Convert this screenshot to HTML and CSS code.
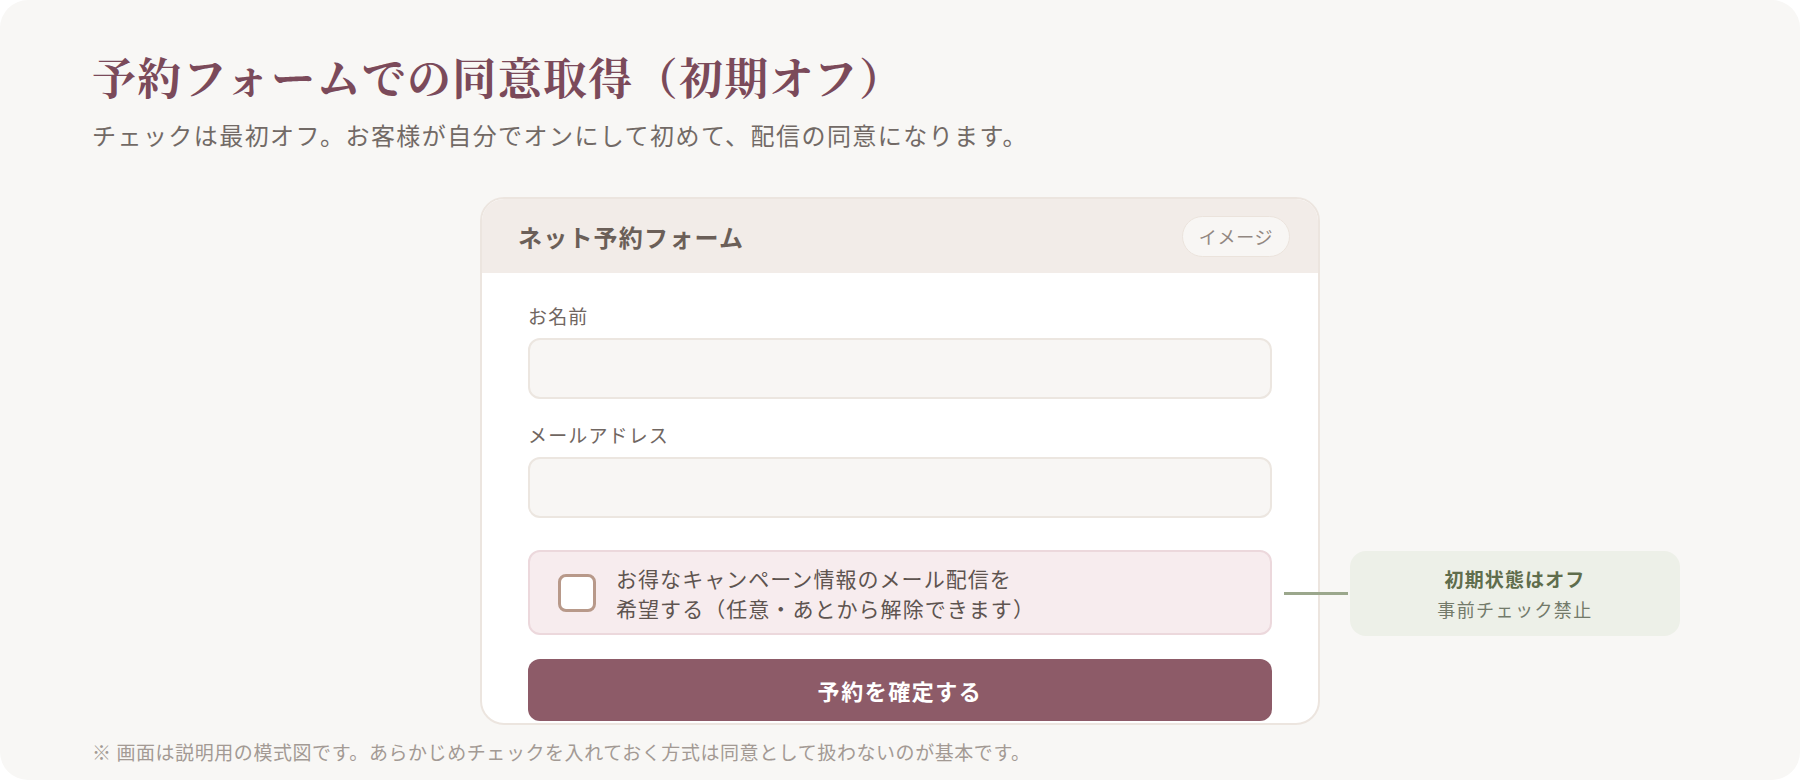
FILE: index.html
```html
<!DOCTYPE html>
<html lang="ja">
<head>
  <meta charset="UTF-8" />
  <meta name="viewport" content="width=device-width, initial-scale=1" />
  <title>予約フォームでの同意取得（初期オフ）</title>
  <link rel="stylesheet" href="styles.css">
</head>
<body>

  <main class="panel">
    <h1 class="title">予約フォームでの同意取得（初期オフ）</h1>
    <p class="lead">チェックは最初オフ。お客様が自分でオンにして初めて、配信の同意になります。</p>

    <div class="stage">
      <section class="form-card">
        <div class="card-head">
          <span class="card-title">ネット予約フォーム</span>
          <span class="pill">イメージ</span>
        </div>

        <div class="card-body">
          <div class="field">
            <label>お名前</label>
            <div class="input"></div>
          </div>

          <div class="field">
            <label>メールアドレス</label>
            <div class="input"></div>
          </div>

          <div class="consent">
            <span class="checkbox"></span>
            <p>お得なキャンペーン情報のメール配信を<br>希望する（任意・あとから解除できます）</p>
          </div>

          <button class="submit" type="button">予約を確定する</button>
        </div>
      </section>

      <aside class="note">
        <strong>初期状態はオフ</strong>
        <span>事前チェック禁止</span>
      </aside>
    </div>

    <p class="footnote">※ 画面は説明用の模式図です。あらかじめチェックを入れておく方式は同意として扱わないのが基本です。</p>
  </main>

</body>
</html>
```

FILE: styles.css
```css
html, body {
  margin: 0;
  background: #ffffff;
}

body {
  font-family: "Noto Sans CJK JP", "Noto Sans", sans-serif;
  color: #706661;
}

.panel {
  box-sizing: border-box;
  width: 1800px;
  height: 780px;
  background: #f8f7f5;
  border-radius: 28px;
  padding: 50px 92px 0;
}

.title {
  margin: 0;
  font-family: "Noto Serif CJK JP", "Liberation Serif", serif;
  font-size: 44px;
  line-height: 52px;
  font-weight: 700;
  letter-spacing: 0.03em;
  color: #7b4a5a;
}

.lead {
  margin: 15px 0 0;
  font-size: 24px;
  line-height: 36px;
  letter-spacing: 0.06em;
  color: #726a66;
}

.stage {
  position: relative;
  width: 840px;
  margin: 44px auto 0;
}

/* form card */
.form-card {
  box-sizing: border-box;
  height: 528px;
  background: #ffffff;
  border: 2px solid #ece5df;
  border-radius: 24px;
  overflow: hidden;
}

.card-head {
  display: flex;
  align-items: center;
  justify-content: space-between;
  height: 74px;
  padding: 0 28px 0 36px;
  background: #f2ece8;
}

.card-title {
  font-size: 24px;
  font-weight: 700;
  letter-spacing: 0.05em;
  color: #6b5f58;
}

.pill {
  display: flex;
  align-items: center;
  justify-content: center;
  box-sizing: border-box;
  width: 108px;
  height: 41px;
  border: 1px solid #ebe3dc;
  border-radius: 21px;
  background: #f8f6f4;
  font-size: 18px;
  letter-spacing: 0.04em;
  color: #928781;
}

.card-body {
  padding: 29px 46px 0;
}

.field {
  display: flex;
  flex-direction: column;
  gap: 8px;
  margin-bottom: 22px;
}

.field label {
  font-size: 19px;
  line-height: 28px;
  letter-spacing: 0.06em;
  color: #706661;
}

.input {
  height: 57px;
  background: #f8f6f4;
  border: 2px solid #ece6e0;
  border-radius: 12px;
}

.consent {
  display: flex;
  align-items: center;
  gap: 20px;
  box-sizing: border-box;
  height: 85px;
  margin-top: 32px;
  padding: 0 28px;
  background: #f7ecee;
  border: 2px solid #ecd8dc;
  border-radius: 12px;
}

.checkbox {
  flex: none;
  box-sizing: border-box;
  width: 38px;
  height: 38px;
  background: #ffffff;
  border: 3px solid #b8998a;
  border-radius: 8px;
}

.consent p {
  margin: 0;
  font-size: 21px;
  line-height: 30px;
  letter-spacing: 0.05em;
  color: #5e5450;
}

.submit {
  display: block;
  width: 100%;
  height: 62px;
  margin-top: 24px;
  border: none;
  border-radius: 12px;
  background: #8d5b68;
  color: #ffffff;
  font-family: inherit;
  font-size: 22px;
  font-weight: 700;
  letter-spacing: 0.07em;
}

/* annotation */
.note {
  position: absolute;
  top: 354px;
  left: 870px;
  box-sizing: border-box;
  width: 330px;
  height: 85px;
  display: flex;
  flex-direction: column;
  align-items: center;
  justify-content: center;
  background: #edf0e8;
  border-radius: 16px;
}

.note::before {
  content: "";
  position: absolute;
  left: -66px;
  top: 41px;
  width: 64px;
  height: 3px;
  background: #9ba78c;
}

.note strong {
  font-size: 19px;
  line-height: 30px;
  letter-spacing: 0.06em;
  color: #5f6d4c;
}

.note span {
  font-size: 18px;
  line-height: 30px;
  letter-spacing: 0.08em;
  color: #737a6a;
}

.footnote {
  margin: 13px 0 0;
  font-size: 19px;
  line-height: 28px;
  letter-spacing: 0.03em;
  color: #a39a94;
}
```
